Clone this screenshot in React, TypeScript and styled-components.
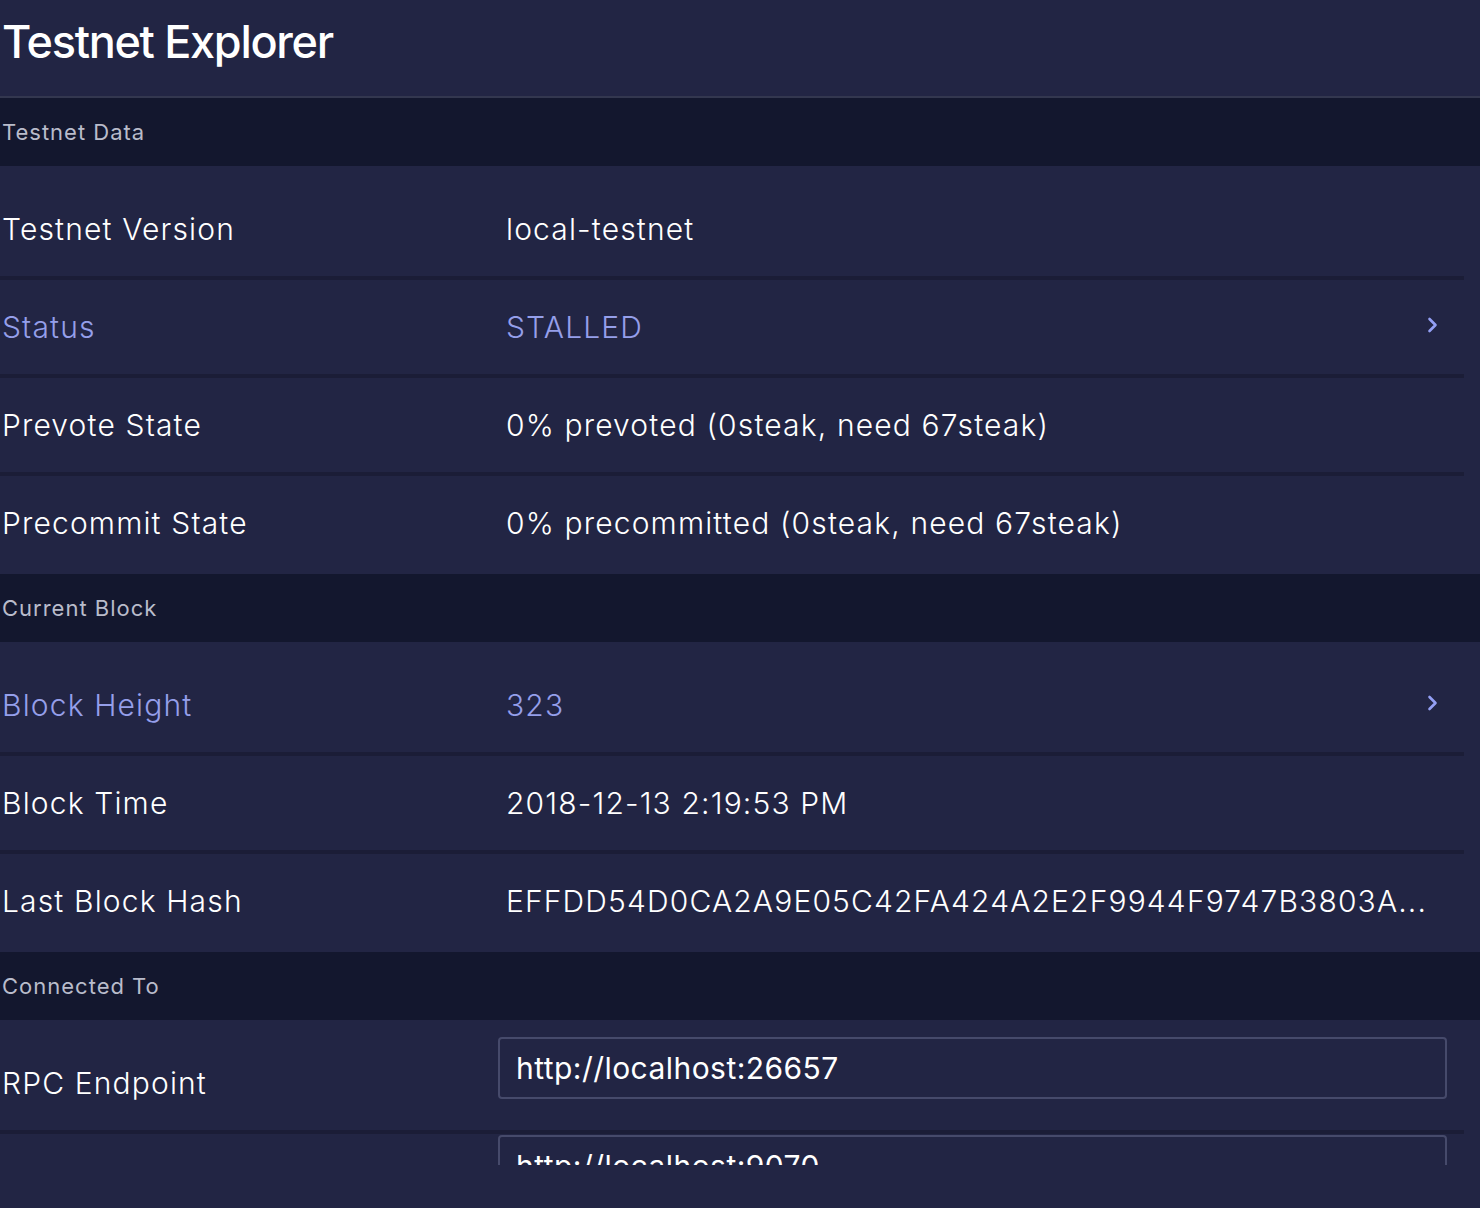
import React from "react";
import styled, { createGlobalStyle } from "styled-components";

const GlobalStyle = createGlobalStyle`
  html, body {
    margin: 0;
    padding: 0;
    background: #222544;
  }
  body {
    font-family: Inter, "Noto Sans", "Open Sans", sans-serif;
    color: #ffffff;
    -webkit-font-smoothing: antialiased;
  }
  * { box-sizing: border-box; }
`;

const Page = styled.div`
  height: 1165px;
  overflow: hidden;
  background: #222544;
`;

const Header = styled.header`
  height: 98px;
  padding: 14px 0 0 2px;
  border-bottom: 2px solid #33374f;
`;

const Title = styled.h1`
  margin: 0;
  font-size: 45px;
  line-height: 56px;
  font-weight: 500;
  letter-spacing: -1.3px;
  color: #ffffff;
`;

const SectionHeader = styled.div`
  height: 68px;
  display: flex;
  align-items: center;
  padding-left: 2px;
  background: #13172e;
  font-size: 22px;
  font-weight: 400;
  color: #b9bccb;
  letter-spacing: 1px;
`;

const List = styled.div`
  padding-top: 16px;
`;

const Row = styled.div<{ $link?: boolean; $top?: boolean }>`
  display: flex;
  align-items: ${(p) => (p.$top ? "flex-start" : "center")};
  height: 98px;
  margin-right: 16px;
  border-bottom: 4px solid #1b1d37;
  color: ${(p) => (p.$link ? "#959fea" : "#ffffff")};
  font-size: 30px;
  font-weight: 300;
  letter-spacing: 1.15px;
  cursor: ${(p) => (p.$link ? "pointer" : "default")};

  &:last-child {
    border-bottom-color: transparent;
  }
`;

const Label = styled.div<{ $shift?: boolean }>`
  flex: 0 0 498px;
  padding-left: 2px;
  align-self: ${(p) => (p.$shift ? "center" : "auto")};
  white-space: nowrap;
`;

const Value = styled.div`
  flex: 1;
  min-width: 0;
  padding-left: 8px;
  white-space: nowrap;
  overflow: hidden;
`;

const Chevron = styled.svg`
  flex: 0 0 auto;
  width: 13px;
  height: 20px;
  margin-right: 25px;
  margin-top: -4px;
`;

const Input = styled.input`
  flex: 0 0 949px;
  height: 62px;
  margin-top: 1px;
  padding: 0 0 0 16px;
  border: 2px solid #464a6b;
  border-radius: 4px;
  background: transparent;
  color: #ffffff;
  font-family: inherit;
  font-size: 30px;
  font-weight: 400;
  letter-spacing: 0.45px;
  outline: none;
`;

type Item = { label: string; value: string; link?: boolean; input?: boolean };

const sections: { title: string; items: Item[] }[] = [
  {
    title: "Testnet Data",
    items: [
      { label: "Testnet Version", value: "local-testnet" },
      { label: "Status", value: "STALLED", link: true },
      { label: "Prevote State", value: "0% prevoted (0steak, need 67steak)" },
      { label: "Precommit State", value: "0% precommitted (0steak, need 67steak)" },
    ],
  },
  {
    title: "Current Block",
    items: [
      { label: "Block Height", value: "323", link: true },
      { label: "Block Time", value: "2018-12-13 2:19:53 PM" },
      { label: "Last Block Hash", value: "EFFDD54D0CA2A9E05C42FA424A2E2F9944F9747B3803A..." },
    ],
  },
  {
    title: "Connected To",
    items: [
      { label: "RPC Endpoint", value: "http://localhost:26657", input: true },
      { label: "LCD Endpoint", value: "http://localhost:9070", input: true },
    ],
  },
];

const ChevronIcon = () => (
  <Chevron viewBox="0 0 13 20" fill="none">
    <path d="M3.5 4 L9.5 10 L3.5 16" stroke="#94a0f5" strokeWidth="2.6" strokeLinecap="round" strokeLinejoin="round" />
  </Chevron>
);

export default function App() {
  return (
    <>
      <GlobalStyle />
      <Page>
        <Header>
          <Title>Testnet Explorer</Title>
        </Header>
        {sections.map((s) => (
          <section key={s.title}>
            <SectionHeader>{s.title}</SectionHeader>
            <List>
              {s.items.map((it) => (
                <Row key={it.label} $link={it.link} $top={it.input}>
                  <Label $shift={it.input}>{it.label}</Label>
                  {it.input ? (
                    <Input defaultValue={it.value} readOnly />
                  ) : (
                    <Value>{it.value}</Value>
                  )}
                  {it.link && <ChevronIcon />}
                </Row>
              ))}
            </List>
          </section>
        ))}
      </Page>
    </>
  );
}
